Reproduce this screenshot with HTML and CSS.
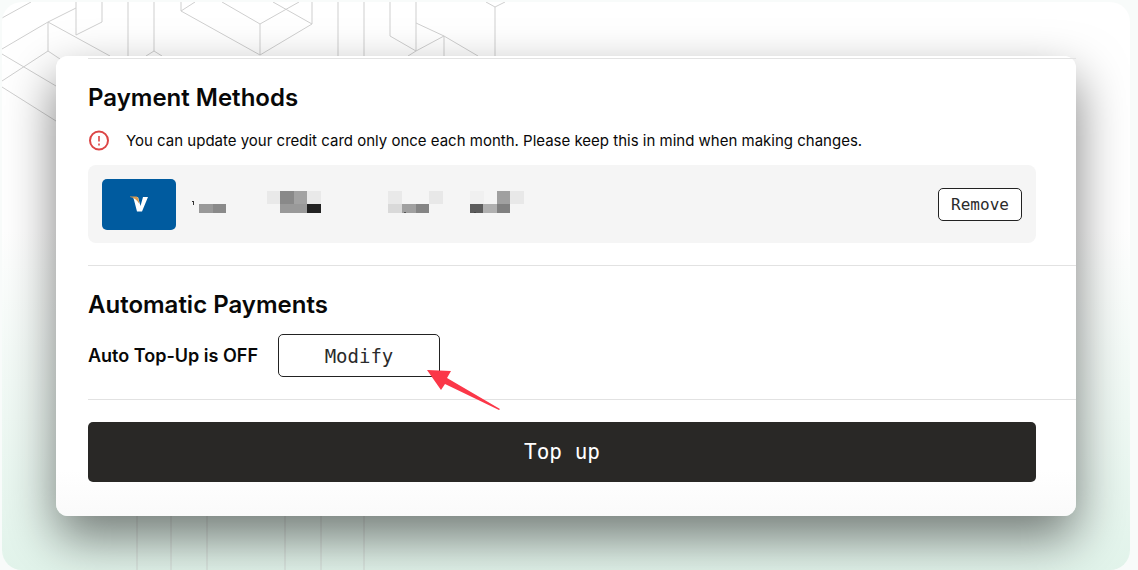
FILE: index.html
```html
<!DOCTYPE html>
<html lang="en">
<head>
    <meta charset="UTF-8">
    <meta name="viewport" content="width=device-width, initial-scale=1.0">
    <title>Billing</title>
    <link rel="stylesheet" href="styles.css">
</head>
<body>

<div class="stage">
    <svg class="pattern pattern-top" width="510" height="124" aria-hidden="true">
        <path d="M0 16L29 0M0 47L46 20L74 6M74 0V33L100 20V0M46 20V49L58 57M46 20L108 54M46 49L0 79M0 52L54 84M0 85L54 119
                 M126 0V54M152 0V49M144 54L152 49L160 54M179 0V9L258 53M179 9L193 0M220 0L258 22L297 0M258 22V53M271 0L310 22V0M310 22L258 53
                 M336 0V54M362 0V54M388 0V34L414 49V0M414 21L442 34L476 54M442 54V34L414 49L406 54M493 54V5L484 0M493 5L503 0"/>
    </svg>
    <svg class="pattern pattern-bottom" width="510" height="54" aria-hidden="true">
        <path d="M135 0V54M169 0V54M205 0V54M283 0V54M319 0V54M362 0V54"/>
    </svg>

    <main class="card">
        <section class="section">
            <h2>Payment Methods</h2>
            <p class="notice">
                <svg width="22" height="22" viewBox="0 0 22 22" aria-hidden="true">
                    <circle cx="11" cy="10.500" r="9" fill="none" stroke="#dc4545" stroke-width="2"/>
                    <path d="M11 6V11.500M11 13.500V15.500" stroke="#dc4545" stroke-width="1.600"/>
                </svg>
                <span>You can update your credit card only once each month. Please keep this in mind when making changes.</span>
            </p>
            <div class="method">
                <svg class="brand" width="74" height="51" viewBox="0 0 74 51" role="img" aria-label="Visa">
                    <rect width="74" height="51" rx="5" fill="#005b9f"/>
                    <path d="M31 18H36L38.500 27L41 18H46L40 32.500H35L32 21Z" fill="#fff"/>
                    <path d="M28 17.500H34.500Q36 17.500 36.500 20L37.500 25Q34 19 28 18Z" fill="#d99a4e"/>
                </svg>
                <!-- masked card number -->
                <svg class="masked" width="336" height="28" viewBox="0 0 336 28" shape-rendering="crispEdges" role="img" aria-label="Card number hidden">
                    <path d="M0 11H2V15H1V12H0Z" fill="#333"/>
                    <rect x="7" y="14" width="14" height="9" fill="#999"/>
                    <rect x="21" y="14" width="13" height="9" fill="#8a8a8a"/>
                    <rect x="75" y="1" width="54" height="13" fill="#e9e9e9"/>
                    <rect x="88" y="1" width="14" height="13" fill="#898989"/>
                    <rect x="102" y="1" width="13" height="13" fill="#a2a2a2"/>
                    <rect x="88" y="14" width="27" height="9" fill="#999"/>
                    <rect x="115" y="14" width="14" height="9" fill="#222"/>
                    <rect x="196" y="1" width="14" height="13" fill="#e9e9e9"/>
                    <rect x="237" y="1" width="14" height="13" fill="#e8e8e8"/>
                    <rect x="196" y="14" width="14" height="9" fill="#d9d9d9"/>
                    <rect x="210" y="14" width="14" height="9" fill="#a0a0a0"/>
                    <rect x="224" y="14" width="13" height="9" fill="#858585"/>
                    <rect x="212" y="22" width="2" height="1" fill="#555"/>
                    <rect x="278" y="1" width="14" height="13" fill="#f0f0f0"/>
                    <rect x="305" y="1" width="13" height="13" fill="#a0a0a0"/>
                    <rect x="318" y="1" width="14" height="13" fill="#e8e8e8"/>
                    <rect x="278" y="14" width="13" height="9" fill="#5c5c5c"/>
                    <rect x="291" y="14" width="14" height="9" fill="#b0b0b0"/>
                    <rect x="305" y="14" width="13" height="9" fill="#808080"/>
                    <rect x="282" y="22" width="2" height="1" fill="#444"/>
                </svg>
                <button type="button" class="btn btn-small">Remove</button>
            </div>
        </section>

        <section class="section">
            <h2>Automatic Payments</h2>
            <div class="auto">
                <span class="status">Auto Top-Up is OFF</span>
                <div class="pointed">
                    <button type="button" class="btn btn-medium">Modify</button>
                    <svg class="arrow" width="74" height="41" viewBox="0 0 74 41" aria-hidden="true">
                        <path d="M0 0L24 1L20 8L73 39L72 40L18 14L14 20Z" fill="#fb3748"/>
                    </svg>
                </div>
            </div>
        </section>

        <section class="section section-last">
            <button type="button" class="btn btn-primary">Top up</button>
        </section>
    </main>
</div>

</body>
</html>
```
FILE: styles.css
```css
/* Basic styling */
* {
    box-sizing: border-box;
}
body {
    margin: 0;
    padding: 2px 8px 0 2px;
    background: #f8fbfa;
    color: #080808;
    font-family: Inter, "Liberation Sans", sans-serif;
}
.stage {
    position: relative;
    min-height: calc(100vh - 2px);
    padding: 54px;
    overflow: hidden;
    border-radius: 20px;
    background: linear-gradient(#fff 0%, #fff 40%, #e2f4eb 100%);
}

/* Line pattern behind the card */
.pattern {
    position: absolute;
    left: 0;
    fill: none;
    stroke: #cfcfcf;
}
.pattern-top {
    top: 0;
}
.pattern-bottom {
    bottom: 0;
    stroke: #d2d8d4;
}

/* Card */
.card {
    position: relative;
    padding: 2px 0 0 32px;
    border-radius: 12px;
    background: linear-gradient(#fff 90%, #fafafa);
    box-shadow: 0 22px 50px rgba(0, 0, 0, 0.5);
}
.section {
    padding: 24px 40px 22px 0;
    border-top: 1px solid #e2e2e2;
}
.section-last {
    padding-top: 22px;
    padding-bottom: 34px;
}
h2 {
    margin: 0;
    font-size: 24px;
    font-weight: 600;
    line-height: 30px;
}
.notice {
    display: flex;
    align-items: center;
    gap: 16px;
    margin: 16px 0 12px;
    font-size: 15px;
    line-height: 24px;
}
.notice svg {
    flex-shrink: 0;
}
.method {
    display: flex;
    align-items: center;
    gap: 16px;
    min-height: 78px;
    padding: 0 14px;
    border-radius: 8px;
    background: #f5f5f5;
}
.auto {
    display: flex;
    align-items: center;
    gap: 20px;
    margin-top: 14px;
}
.status {
    font-size: 18px;
    font-weight: 600;
}
.pointed {
    position: relative;
}
.arrow {
    position: absolute;
    top: 36px;
    left: 149px;
}

/* Buttons */
.btn {
    display: block;
    padding: 0;
    border: 1px solid #222;
    border-radius: 5px;
    background: #fff;
    color: #2b2b2b;
    font-family: "DejaVu Sans Mono", monospace;
    cursor: pointer;
}
.btn-small {
    width: 84px;
    height: 33px;
    margin-left: auto;
    font-size: 16px;
}
.btn-medium {
    width: 162px;
    height: 43px;
    font-size: 19px;
}
.btn-primary {
    width: 100%;
    height: 60px;
    border: none;
    background: #292826;
    color: #fff;
    font-size: 21px;
}
```
